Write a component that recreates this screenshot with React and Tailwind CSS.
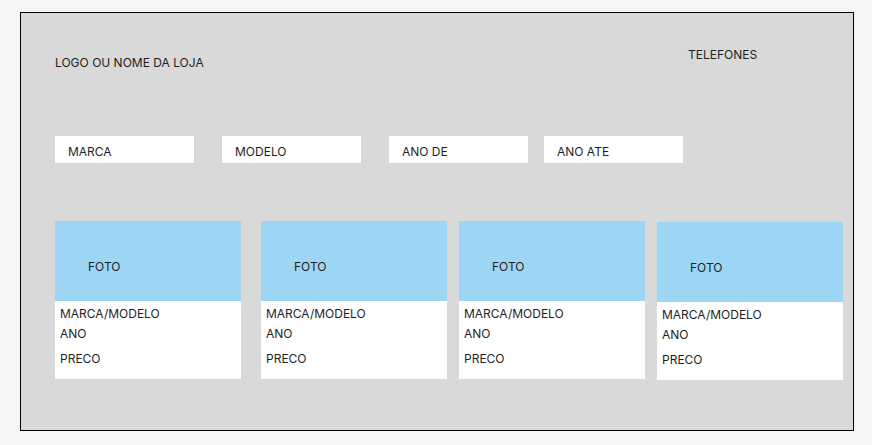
import React from 'react';

const filters = [
  { label: 'MARCA', gap: '' },
  { label: 'MODELO', gap: 'ml-[28px]' },
  { label: 'ANO DE', gap: 'ml-[28px]' },
  { label: 'ANO ATE', gap: 'ml-[16px]' },
];

const cards = [
  { gap: '' },
  { gap: 'ml-[20px]' },
  { gap: 'ml-[12px]' },
  { gap: 'ml-[12px] mt-[1px]' },
];

function Card({ gap }) {
  return (
    <div className={`w-[186px] h-[158px] bg-white flex flex-col ${gap}`}>
      {/* photo placeholder */}
      <div className="h-[80px] bg-[#9dd5f5] pl-[33px] pt-[38px]">
        <span className="block leading-[15px]">FOTO</span>
      </div>
      <div className="pl-[5px] pt-[3px]">
        <div className="leading-[20px]">MARCA/MODELO</div>
        <div className="leading-[20px]">ANO</div>
        <div className="leading-[20px] mt-[5px]">PRECO</div>
      </div>
    </div>
  );
}

export default function App() {
  return (
    <div
      className="min-h-screen bg-[#f5f5f5] pl-[20px] pt-[12px] text-[12px] text-[#1e1e1e]"
      style={{ fontFamily: 'Inter, "Liberation Sans", sans-serif' }}
    >
      <div className="w-[834px] h-[419px] border border-black bg-[#d9d9d9] pl-[34px]">
        {/* Header */}
        <div className="flex items-start pt-[34px]">
          <span className="w-[633px] mt-[8px] leading-[15px]">LOGO OU NOME DA LOJA</span>
          <span className="leading-[15px]">TELEFONES</span>
        </div>

        {/* Filters */}
        <div className="flex mt-[66px]">
          {filters.map((f) => (
            <div key={f.label} className={`w-[139px] h-[27px] bg-white pl-[13px] pt-[8px] leading-[15px] ${f.gap}`}>
              {f.label}
            </div>
          ))}
        </div>

        {/* Listings */}
        <div className="flex items-start mt-[58px]">
          {cards.map((c, i) => (
            <Card key={i} gap={c.gap} />
          ))}
        </div>
      </div>
    </div>
  );
}
